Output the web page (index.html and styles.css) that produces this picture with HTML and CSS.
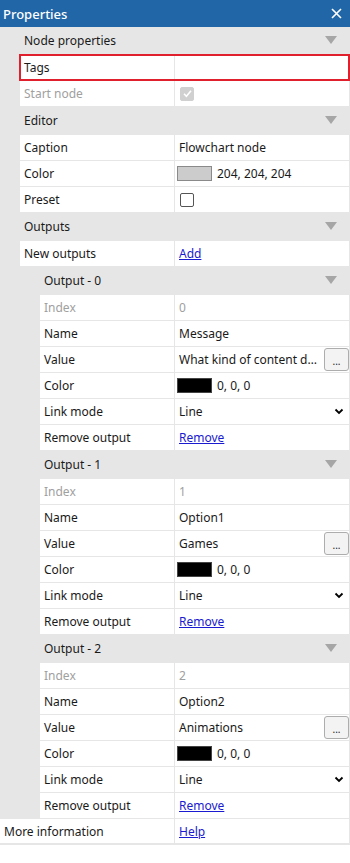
FILE: index.html
```html
<!DOCTYPE html>
<html>
<head>
<meta charset="utf-8">
<link rel="stylesheet" href="styles.css">
</head>
<body>
<div class="panel">
  <div class="titlebar">
    <span class="title">Properties</span>
    <svg class="close" width="11" height="11" viewBox="0 0 11 11"><path d="M1 1 L10 10 M10 1 L1 10" stroke="#fff" stroke-width="1.6" fill="none"/></svg>
  </div>
  <div class="grid">
    <div class="cat l1"><span>Node properties</span><span class="tri"></span></div>
    <div class="row l1 selected"><div class="name">Tags</div><div class="val"></div></div>
    <div class="row l1"><div class="name dis">Start node</div><div class="val"><span class="chk checked"><svg width="11" height="11" viewBox="0 0 11 11"><path d="M2 5.8 L4.4 8.2 L9 2.8" stroke="#fff" stroke-width="1.6" fill="none"/></svg></span></div></div>

    <div class="cat l1"><span>Editor</span><span class="tri"></span></div>
    <div class="row l1"><div class="name">Caption</div><div class="val">Flowchart node</div></div>
    <div class="row l1"><div class="name">Color</div><div class="val"><span class="swatch light"></span>204, 204, 204</div></div>
    <div class="row l1"><div class="name">Preset</div><div class="val"><span class="chk"></span></div></div>

    <div class="cat l1"><span>Outputs</span><span class="tri"></span></div>
    <div class="row l1"><div class="name">New outputs</div><div class="val"><a class="link">Add</a></div></div>

    <div class="cat l2"><span>Output - 0</span><span class="tri"></span></div>
    <div class="row l2"><div class="name dis">Index</div><div class="val dis">0</div></div>
    <div class="row l2"><div class="name">Name</div><div class="val">Message</div></div>
    <div class="row l2"><div class="name">Value</div><div class="val"><span class="txt">What kind of content do you like?</span><span class="dots">...</span></div></div>
    <div class="row l2"><div class="name">Color</div><div class="val"><span class="swatch"></span>0, 0, 0</div></div>
    <div class="row l2"><div class="name">Link mode</div><div class="val"><span class="txt">Line</span><svg class="chev" width="10" height="7" viewBox="0 0 10 7"><path d="M1.5 1.5 L5 5 L8.5 1.5" stroke="#000" stroke-width="1.8" fill="none"/></svg></div></div>
    <div class="row l2"><div class="name">Remove output</div><div class="val"><a class="link">Remove</a></div></div>

    <div class="cat l2"><span>Output - 1</span><span class="tri"></span></div>
    <div class="row l2"><div class="name dis">Index</div><div class="val dis">1</div></div>
    <div class="row l2"><div class="name">Name</div><div class="val">Option1</div></div>
    <div class="row l2"><div class="name">Value</div><div class="val"><span class="txt">Games</span><span class="dots">...</span></div></div>
    <div class="row l2"><div class="name">Color</div><div class="val"><span class="swatch"></span>0, 0, 0</div></div>
    <div class="row l2"><div class="name">Link mode</div><div class="val"><span class="txt">Line</span><svg class="chev" width="10" height="7" viewBox="0 0 10 7"><path d="M1.5 1.5 L5 5 L8.5 1.5" stroke="#000" stroke-width="1.8" fill="none"/></svg></div></div>
    <div class="row l2"><div class="name">Remove output</div><div class="val"><a class="link">Remove</a></div></div>

    <div class="cat l2"><span>Output - 2</span><span class="tri"></span></div>
    <div class="row l2"><div class="name dis">Index</div><div class="val dis">2</div></div>
    <div class="row l2"><div class="name">Name</div><div class="val">Option2</div></div>
    <div class="row l2"><div class="name">Value</div><div class="val"><span class="txt">Animations</span><span class="dots">...</span></div></div>
    <div class="row l2"><div class="name">Color</div><div class="val"><span class="swatch"></span>0, 0, 0</div></div>
    <div class="row l2"><div class="name">Link mode</div><div class="val"><span class="txt">Line</span><svg class="chev" width="10" height="7" viewBox="0 0 10 7"><path d="M1.5 1.5 L5 5 L8.5 1.5" stroke="#000" stroke-width="1.8" fill="none"/></svg></div></div>
    <div class="row l2"><div class="name">Remove output</div><div class="val"><a class="link">Remove</a></div></div>

    <div class="row l0 last"><div class="name">More information</div><div class="val"><a class="link">Help</a></div></div>
  </div>
</div>
</body>
</html>
```
FILE: styles.css
```css
* { box-sizing: border-box; }
html, body { margin: 0; padding: 0; background: #fff; }
body {
  width: 350px;
  font-family: "Noto Sans", "Open Sans", sans-serif;
  font-size: 12px;
  color: #1a1a1a;
}
.panel { width: 350px; }
.titlebar {
  height: 27px;
  background: #2166a7;
  color: #fff;
  display: flex;
  align-items: center;
  justify-content: space-between;
  padding: 0 8px 0 3px;
}
.title { font-size: 13px; font-weight: 500; }
.close { display: block; }
.grid {
  background: #e6e6e6;
  display: flex;
  flex-direction: column;
  gap: 1px;
  padding-right: 1px;
  border-bottom: 1px solid #e6e6e6;
}
.cat {
  height: 27px;
  display: flex;
  align-items: center;
  justify-content: space-between;
  padding-right: 12px;
  padding-bottom: 1px;
  color: #1a1a1a;
}
.cat.l1 { padding-left: 24px; }
.cat.l2 { padding-left: 44px; }
.tri {
  width: 0; height: 0;
  border-left: 6px solid transparent;
  border-right: 6px solid transparent;
  border-top: 8px solid #a6a6a6;
}
.row {
  height: 25px;
  display: flex;
  background: #fff;
}
.row.l1 { margin-left: 20px; }
.row.l2 { margin-left: 40px; }
.row.l0 { margin-left: 0; }
.name {
  display: flex;
  align-items: center;
  padding-left: 4px;
  border-right: 1px solid #e6e6e6;
  white-space: nowrap;
}
.l0 .name { width: 175px; }
.l1 .name { width: 155px; }
.l2 .name { width: 135px; }
.val {
  flex: 1;
  min-width: 0;
  display: flex;
  align-items: center;
  padding-left: 4px;
  white-space: nowrap;
}
.dis { color: #a0a0a0; }
.selected { outline: 2px solid #e0202c; outline-offset: -1px; position: relative; }
.txt { flex: 1; min-width: 0; overflow: hidden; text-overflow: ellipsis; padding-right: 3px; }
.dots {
  width: 25px;
  height: 23px;
  border: 1px solid #adadad;
  border-radius: 3px;
  background: #f3f3f3;
  font-size: 10px;
  display: flex;
  align-items: center;
  justify-content: center;
  padding-top: 2px;
  flex: none;
}
.chev { flex: none; margin-right: 5px; }
.swatch {
  width: 35px; height: 15px;
  background: #000;
  border: 1px solid #444;
  margin: 0 5px 0 -2px;
  flex: none;
}
.swatch.light { background: #cccccc; border-color: #8a8a8a; }
.chk {
  width: 14px; height: 14px;
  border: 1px solid #555;
  border-radius: 2px;
  background: #fff;
  display: flex;
  align-items: center;
  justify-content: center;
  margin-left: 1px;
}
.chk.checked { background: #d0d0d0; border-color: #d0d0d0; }
.link { color: #1a1ad0; text-decoration: underline; cursor: pointer; }
.last { border-bottom: 1px solid #e6e6e6; }
```
